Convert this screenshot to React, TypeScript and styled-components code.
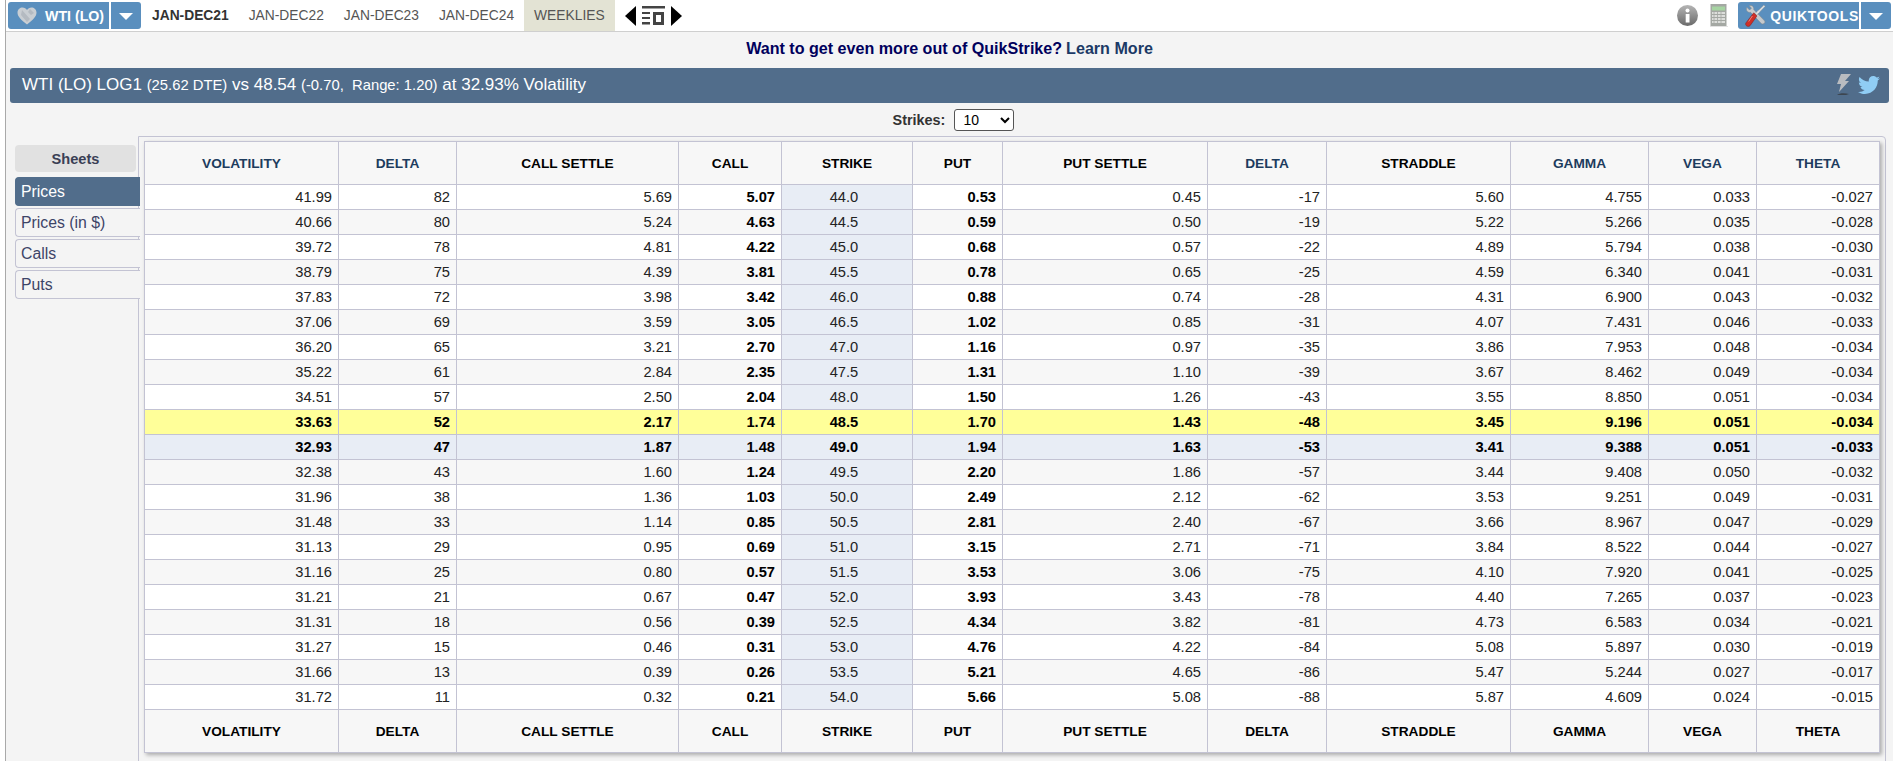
import styled, { createGlobalStyle } from "styled-components";
import { FaTwitter } from "react-icons/fa";

const GlobalStyle = createGlobalStyle`
  html, body {
    margin: 0;
    padding: 0;
    height: 100%;
    overflow: hidden;
    background: #fff;
    font-family: "Liberation Sans", Arial, sans-serif;
  }
`;

const Page = styled.div`
  margin-left: 5px;
  height: 100vh;
  overflow: hidden;
  border-left: 1px solid #a9a9a9;
  background: #f4f4f4;
`;

const TopBar = styled.div`
  height: 31px;
  box-sizing: content-box;
  display: flex;
  align-items: stretch;
  justify-content: space-between;
  background: #fff;
  border-bottom: 1px solid #cfcfcf;
`;

const TopGroup = styled.div`
  display: flex;
  align-items: center;
`;

const BlueButton = styled.div<{ $left?: boolean; $right?: boolean }>`
  height: 27px;
  display: flex;
  align-items: center;
  background: #5a8fbe;
  color: #fff;
  font-weight: bold;
  font-size: 14.2px;
  border-radius: ${(p) => (p.$left ? "3px 0 0 3px" : p.$right ? "0 3px 3px 0" : "0")};
`;

const FavButton = styled(BlueButton)`
  width: 101px;
  margin-left: 2px;
  padding-left: 9px;
  box-sizing: border-box;
  gap: 8px;
`;

const ToolsButton = styled(BlueButton)`
  width: 121px;
  padding-left: 7px;
  box-sizing: border-box;
  gap: 4px;
  font-size: 14px;
  letter-spacing: 0.65px;
`;

const CaretButton = styled(BlueButton)<{ $width: number }>`
  width: ${(p) => p.$width}px;
  margin-left: 2px;
  justify-content: center;

  &::after {
    content: "";
    border-left: 7px solid transparent;
    border-right: 7px solid transparent;
    border-top: 7px solid #fff;
    margin-top: 2px;
  }
`;

const TabList = styled.div`
  display: flex;
  align-self: stretch;
  margin-left: 1px;
`;

const Tab = styled.div<{ $active?: boolean; $shaded?: boolean }>`
  display: flex;
  align-items: center;
  padding: 0 10px;
  font-size: 13.8px;
  color: ${(p) => (p.$active ? "#333" : "#555")};
  font-weight: ${(p) => (p.$active ? "bold" : "normal")};
  background: ${(p) => (p.$shaded ? "#e3e3d4" : "transparent")};
`;

const ScrollControls = styled.div`
  display: flex;
  align-items: center;
  gap: 6px;
  margin-left: 10px;
`;

const RightGroup = styled(TopGroup)`
  padding-right: 2px;
`;

const InfoWrap = styled.div`
  display: flex;
  margin-right: 12px;
`;

const CalcWrap = styled.div`
  display: flex;
  margin-right: 10px;
`;

const Promo = styled.div`
  height: 33px;
  padding-bottom: 3px;
  display: flex;
  align-items: center;
  justify-content: center;
  font-size: 16.1px;
  font-weight: bold;
  color: #00005c;

  span {
    color: #1c3a66;
    margin-left: 4px;
  }
`;

const TitleBar = styled.div`
  margin: 0 4px 0 4px;
  height: 35px;
  padding: 0 9px 2px 12px;
  box-sizing: border-box;
  display: flex;
  align-items: center;
  justify-content: space-between;
  background: #516d8b;
  border-radius: 3px;
  color: #fff;
  font-size: 17px;

  small {
    font-size: 14.8px;
  }
`;

const TitleIcons = styled.div`
  display: flex;
  align-items: center;
  gap: 7px;
  color: #90cdf4;
  font-size: 22px;
`;

const StrikesRow = styled.div`
  height: 33px;
  display: flex;
  align-items: center;
  justify-content: center;
  gap: 9px;
  font-size: 14.4px;
  font-weight: bold;
  color: #333;
  padding-left: 8px;
  box-sizing: border-box;
`;

const StrikesSelect = styled.select`
  width: 60px;
  height: 22px;
  font-family: "Liberation Sans", Arial, sans-serif;
  font-size: 14px;
  background: #fff;
  border: 1px solid #555;
  border-radius: 3px;
  padding-left: 4px;
`;

const Body = styled.div`
  display: flex;
  align-items: flex-start;
`;

const Sidebar = styled.div`
  position: relative;
  z-index: 1;
  width: 125px;
  flex: none;
  margin: 9px -2px 0 9px;
  display: flex;
  flex-direction: column;
`;

const SheetsHeader = styled.div`
  width: 121px;
  height: 27px;
  display: flex;
  align-items: center;
  justify-content: center;
  background: #e1e1e1;
  border-radius: 4px;
  font-size: 14.6px;
  font-weight: bold;
  color: #3a3f55;
  margin-bottom: 5px;
`;

const SheetTab = styled.div<{ $active?: boolean }>`
  height: 29px;
  box-sizing: border-box;
  margin-bottom: 2px;
  padding-left: 5px;
  display: flex;
  align-items: center;
  font-size: 15.8px;
  border: 1px solid ${(p) => (p.$active ? "#516d8b" : "#c3c3d3")};
  border-right: none;
  border-radius: 4px 0 0 4px;
  background: ${(p) => (p.$active ? "#516d8b" : "#f4f4f4")};
  color: ${(p) => (p.$active ? "#fff" : "#3d4468")};
`;

const Panel = styled.div`
  flex: 1;
  height: 640px;
  margin-right: 9px;
  box-sizing: border-box;
  padding: 4px 5px 0 5px;
  border: 1px solid #c3c3d3;
  border-radius: 0 4px 0 0;
`;

const Table = styled.table`
  width: 1735px;
  table-layout: fixed;
  border-collapse: collapse;
  box-shadow: 2px 2px 4px rgba(0, 0, 0, 0.3);
  font-size: 14.7px;
`;

const HeadCell = styled.th<{ $navy?: boolean }>`
  height: 42px;
  padding: 0;
  text-align: center;
  font-size: 13.7px;
  font-weight: bold;
  background: #f7f7f7;
  color: ${(p) => (p.$navy ? "#1d3c5e" : "#000")};
  border: 1px solid #c3c3d3;
`;

const Row = styled.tr<{ $even: boolean; $kind: "plain" | "atm" | "current" }>`
  background: ${(p) =>
    p.$kind === "atm" ? "#ffff99" : p.$kind === "current" ? "#e8edf5" : p.$even ? "#f7f7f7" : "#fff"};
  font-weight: ${(p) => (p.$kind === "plain" ? "normal" : "bold")};
  color: ${(p) => (p.$kind === "plain" ? "#222" : "#000")};
`;

const Cell = styled.td<{ $strong?: boolean; $strike?: boolean; $atm?: boolean }>`
  height: 24px;
  padding: 0 6px 0 0;
  text-align: ${(p) => (p.$strike ? "center" : "right")};
  border: 1px solid #c3c3d3;
  font-weight: ${(p) => (p.$strong ? "bold" : "inherit")};
  color: ${(p) => (p.$strong ? "#000" : "inherit")};
  background: ${(p) => (p.$strike && !p.$atm ? "#e8edf5" : "transparent")};
`;

const columns = [
  { label: "VOLATILITY", width: 194, navy: true },
  { label: "DELTA", width: 118, navy: true },
  { label: "CALL SETTLE", width: 222 },
  { label: "CALL", width: 103 },
  { label: "STRIKE", width: 131 },
  { label: "PUT", width: 90 },
  { label: "PUT SETTLE", width: 205 },
  { label: "DELTA", width: 119, navy: true },
  { label: "STRADDLE", width: 184 },
  { label: "GAMMA", width: 138, navy: true },
  { label: "VEGA", width: 108, navy: true },
  { label: "THETA", width: 123, navy: true },
];

const rows = `41.99 82 5.69 5.07 44.0 0.53 0.45 -17 5.60 4.755 0.033 -0.027
40.66 80 5.24 4.63 44.5 0.59 0.50 -19 5.22 5.266 0.035 -0.028
39.72 78 4.81 4.22 45.0 0.68 0.57 -22 4.89 5.794 0.038 -0.030
38.79 75 4.39 3.81 45.5 0.78 0.65 -25 4.59 6.340 0.041 -0.031
37.83 72 3.98 3.42 46.0 0.88 0.74 -28 4.31 6.900 0.043 -0.032
37.06 69 3.59 3.05 46.5 1.02 0.85 -31 4.07 7.431 0.046 -0.033
36.20 65 3.21 2.70 47.0 1.16 0.97 -35 3.86 7.953 0.048 -0.034
35.22 61 2.84 2.35 47.5 1.31 1.10 -39 3.67 8.462 0.049 -0.034
34.51 57 2.50 2.04 48.0 1.50 1.26 -43 3.55 8.850 0.051 -0.034
33.63 52 2.17 1.74 48.5 1.70 1.43 -48 3.45 9.196 0.051 -0.034
32.93 47 1.87 1.48 49.0 1.94 1.63 -53 3.41 9.388 0.051 -0.033
32.38 43 1.60 1.24 49.5 2.20 1.86 -57 3.44 9.408 0.050 -0.032
31.96 38 1.36 1.03 50.0 2.49 2.12 -62 3.53 9.251 0.049 -0.031
31.48 33 1.14 0.85 50.5 2.81 2.40 -67 3.66 8.967 0.047 -0.029
31.13 29 0.95 0.69 51.0 3.15 2.71 -71 3.84 8.522 0.044 -0.027
31.16 25 0.80 0.57 51.5 3.53 3.06 -75 4.10 7.920 0.041 -0.025
31.21 21 0.67 0.47 52.0 3.93 3.43 -78 4.40 7.265 0.037 -0.023
31.31 18 0.56 0.39 52.5 4.34 3.82 -81 4.73 6.583 0.034 -0.021
31.27 15 0.46 0.31 53.0 4.76 4.22 -84 5.08 5.897 0.030 -0.019
31.66 13 0.39 0.26 53.5 5.21 4.65 -86 5.47 5.244 0.027 -0.017
31.72 11 0.32 0.21 54.0 5.66 5.08 -88 5.87 4.609 0.024 -0.015`
  .split("\n")
  .map((line) => line.split(" "));

const HeartIcon = () => (
  <svg width="20" height="18" viewBox="0 0 20 18">
    <path
      d="M10 17.5C4 13 .5 9.5.5 5.5.5 2.5 3 .5 5.5.5c2 0 3.500 1 4.500 2.500C11 1.500 12.500.5 14.500.5 17 .5 19.500 2.500 19.500 5.500c0 4-3.500 7.500-9.500 12z"
      fill="#c9ced3"
    />
    <path d="M5 3l8 9-3 3-6-7zM13 2l4 4-3 2-3-3z" fill="#b4bac1" />
  </svg>
);

const PrevArrow = () => (
  <svg width="11" height="20" viewBox="0 0 11 20">
    <path d="M11 0v20L0 10z" fill="#000" />
  </svg>
);

const NextArrow = () => (
  <svg width="11" height="20" viewBox="0 0 11 20">
    <path d="M0 0v20l11-10z" fill="#000" />
  </svg>
);

const ColumnsIcon = () => (
  <svg width="23" height="20" viewBox="0 0 23 20" fill="#444">
    <rect x="0" y="0" width="23" height="2.500" />
    <rect x="0" y="6" width="8" height="2" />
    <rect x="0" y="11" width="8" height="2" />
    <rect x="0" y="16" width="8" height="2.500" />
    <path d="M11 6h11v13H11zM14 9v7h5V9z" fillRule="evenodd" />
  </svg>
);

const InfoIcon = () => (
  <svg width="21" height="21" viewBox="0 0 21 21">
    <defs>
      <linearGradient id="infoFill" x1="0" y1="0" x2="0" y2="1">
        <stop offset="0" stopColor="#b5b5b5" />
        <stop offset="1" stopColor="#6a6a6a" />
      </linearGradient>
    </defs>
    <circle cx="10.500" cy="10.500" r="10.500" fill="url(#infoFill)" />
    <circle cx="10.500" cy="5.500" r="2" fill="#fff" />
    <rect x="8.700" y="9" width="3.800" height="8.500" fill="#fff" />
  </svg>
);

const CalculatorIcon = () => (
  <svg width="18" height="23" viewBox="0 0 18 23">
    <rect x="0.500" y="0" width="16" height="22" fill="#a4a8a3" />
    <rect x="2" y="2.500" width="13" height="4" fill="#a6d4a2" />
    <path
      d="M2 9h13M2 12h13M2 15h13M2 18h13"
      stroke="#dcdedb"
      strokeWidth="1.800"
    />
    <path
      d="M4 8v12M7.500 8v12M11 8v12"
      stroke="#a4a8a3"
      strokeWidth=".8"
    />
    <rect x="0" y="22" width="18" height="1" fill="#e2e2e2" />
  </svg>
);

const ToolsIcon = () => (
  <svg width="23" height="24" viewBox="0 0 23 24">
    <path
      d="M2 2.500 5 5.500 7 3.500 4.500.8C7 -.2 10 1.500 9.500 5L21.500 17.500c1 2-1.500 4-3.500 3L6 8C3 8.500.5 6 2 2.500z"
      fill="#c6cacd"
      stroke="#7f868b"
      strokeWidth=".6"
    />
    <path d="M22 1.500 20.500 0 15 5.500l-1 .5-3 3.500 1.500 1.500 3.500-3 .5-1z" fill="#dfe2e4" stroke="#7f868b" strokeWidth=".5" />
    <path
      d="M9.500 8.500 13 12 5.500 22.500C3.500 24.500-.5 22.500 1 19.500z"
      fill="#cf2f28"
      stroke="#7c1712"
      strokeWidth=".5"
    />
    <path d="M8 12 4 18" stroke="#ef8a80" strokeWidth="1" />
  </svg>
);

const BoltIcon = () => (
  <svg width="15" height="21" viewBox="0 0 15 21">
    <path d="M5 0h10L9 7h4L3 18l2-8H1z" fill="#b9bcc0" />
    <path d="M1 21c2-2 8-2 12-1l-3 1z" fill="#3d4650" />
  </svg>
);

const App = () => {
  return (
    <>
      <GlobalStyle />
      <Page>
        <TopBar>
          <TopGroup>
            <FavButton $left>
              <HeartIcon />
              WTI (LO)
            </FavButton>
            <CaretButton $right $width={30} />
            <TabList>
              <Tab $active>JAN-DEC21</Tab>
              <Tab>JAN-DEC22</Tab>
              <Tab>JAN-DEC23</Tab>
              <Tab>JAN-DEC24</Tab>
              <Tab $shaded>WEEKLIES</Tab>
            </TabList>
            <ScrollControls>
              <PrevArrow />
              <ColumnsIcon />
              <NextArrow />
            </ScrollControls>
          </TopGroup>
          <RightGroup>
            <InfoWrap>
              <InfoIcon />
            </InfoWrap>
            <CalcWrap>
              <CalculatorIcon />
            </CalcWrap>
            <ToolsButton $left>
              <ToolsIcon />
              QUIKTOOLS
            </ToolsButton>
            <CaretButton $right $width={30} />
          </RightGroup>
        </TopBar>

        <Promo>
          Want to get even more out of QuikStrike?<span>Learn More</span>
        </Promo>

        <TitleBar>
          <div>
            WTI (LO) LOG1 <small>(25.62 DTE)</small> vs 48.54 <small>(-0.70,&nbsp; Range: 1.20)</small> at 32.93% Volatility
          </div>
          <TitleIcons>
            <BoltIcon />
            <FaTwitter />
          </TitleIcons>
        </TitleBar>

        <StrikesRow>
          Strikes:
          <StrikesSelect defaultValue="10">
            <option>5</option>
            <option>10</option>
            <option>20</option>
          </StrikesSelect>
        </StrikesRow>

        <Body>
          <Sidebar>
            <SheetsHeader>Sheets</SheetsHeader>
            <SheetTab $active>Prices</SheetTab>
            <SheetTab>Prices (in $)</SheetTab>
            <SheetTab>Calls</SheetTab>
            <SheetTab>Puts</SheetTab>
          </Sidebar>
          <Panel>
            <Table>
              <colgroup>
                {columns.map((col, i) => (
                  <col key={i} width={col.width} />
                ))}
              </colgroup>
              <thead>
                <tr>
                  {columns.map((col, i) => (
                    <HeadCell key={i} $navy={col.navy}>
                      {col.label}
                    </HeadCell>
                  ))}
                </tr>
              </thead>
              <tbody>
                {rows.map((row, r) => {
                  const kind = r === 9 ? "atm" : r === 10 ? "current" : "plain";
                  return (
                    <Row key={r} $even={r % 2 === 1} $kind={kind}>
                      {row.map((value, c) => (
                        <Cell
                          key={c}
                          $strong={c === 3 || c === 5}
                          $strike={c === 4}
                          $atm={r === 9}
                        >
                          {value}
                        </Cell>
                      ))}
                    </Row>
                  );
                })}
              </tbody>
              <tfoot>
                <tr>
                  {columns.map((col, i) => (
                    <HeadCell key={i}>{col.label}</HeadCell>
                  ))}
                </tr>
              </tfoot>
            </Table>
          </Panel>
        </Body>
      </Page>
    </>
  );
};

export default App;
